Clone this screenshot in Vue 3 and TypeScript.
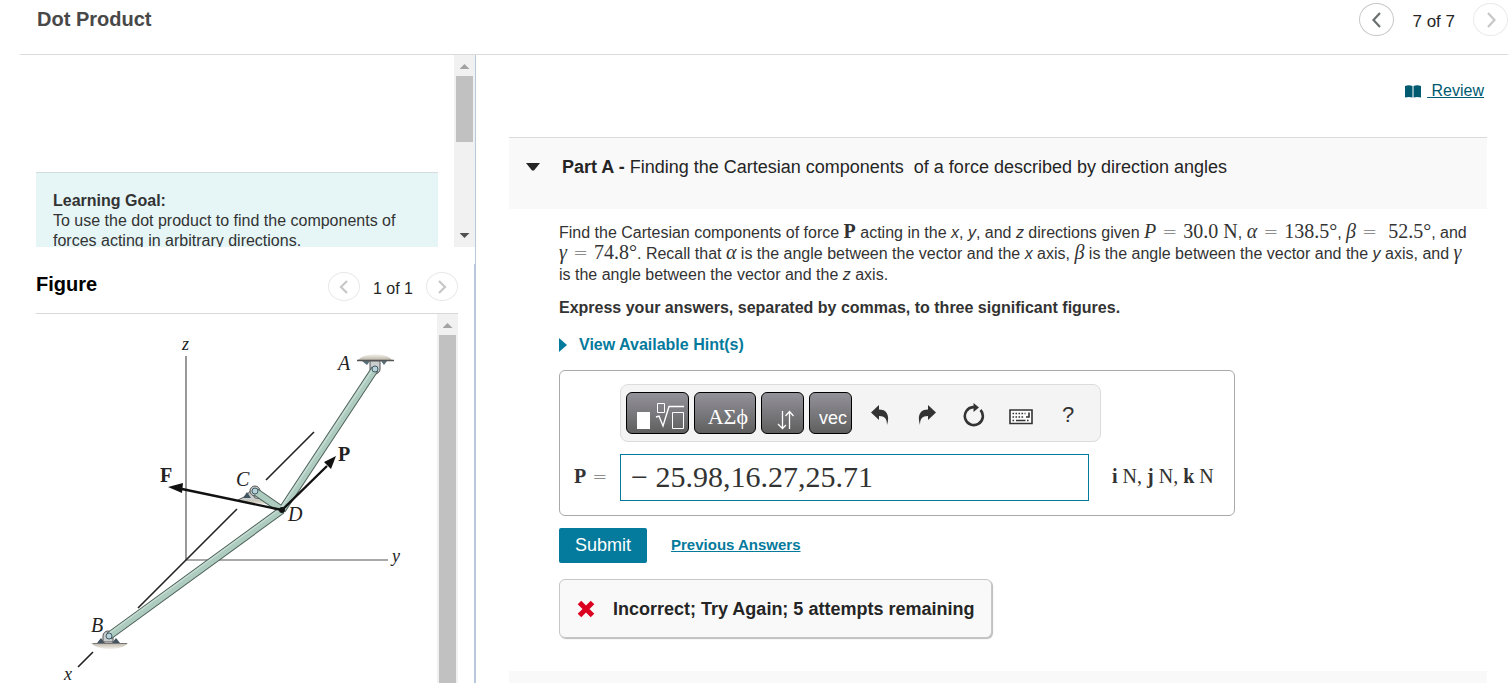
<script setup lang="ts">
import { ref } from 'vue'

const answer = ref('− 25.98,16.27,25.71')
const item = ref(7)
const itemCount = 7
const figure = ref(1)
const figureCount = 1
</script>

<template>
  <div class="page">
    <header class="top">
      <h1>Dot Product</h1>
      <nav class="pager" aria-label="Items">
        <button class="round" type="button" aria-label="Previous item">
          <svg width="12" height="16" viewBox="0 0 12 16"><path d="M9 1 2.500 8 9 15" /></svg>
        </button>
        <span>{{ item }} of {{ itemCount }}</span>
        <button class="round off" type="button" aria-label="Next item" disabled>
          <svg width="12" height="16" viewBox="0 0 12 16"><path d="M3 1 9.500 8 3 15" /></svg>
        </button>
      </nav>
    </header>

    <div class="columns">
      <aside class="side">
        <div class="intro">
          <div class="intro-view">
            <div class="goal">
              <strong>Learning Goal:</strong>
              <p>To use the dot product to find the components of forces acting in arbitrary directions.</p>
            </div>
          </div>
          <div class="bar" aria-hidden="true">
            <i class="arrow up"></i>
            <i class="thumb short"></i>
            <i class="arrow down"></i>
          </div>
        </div>

        <section class="figure">
          <div class="figure-head">
            <h2>Figure</h2>
            <nav class="pager small" aria-label="Figures">
              <button class="round off" type="button" aria-label="Previous figure" disabled>
                <svg width="12" height="16" viewBox="0 0 12 16"><path d="M9 2 3 8l6 6" /></svg>
              </button>
              <span>{{ figure }} of {{ figureCount }}</span>
              <button class="round off" type="button" aria-label="Next figure" disabled>
                <svg width="12" height="16" viewBox="0 0 12 16"><path d="m3 2 6 6-6 6" /></svg>
              </button>
            </nav>
          </div>
          <div class="figure-body">
            <div class="figure-view">
              <svg class="drawing" width="400" height="400" viewBox="36 314 400 400" role="img" aria-label="Pipe assembly A, B, C, D with forces F and P">
                <defs>
                  <linearGradient id="ground" x1="0" y1="0" x2="0" y2="1">
                    <stop offset="0" stop-color="#b9b4a6" />
                    <stop offset="1" stop-color="#f4f1ea" />
                  </linearGradient>
                  <linearGradient id="ceiling" x1="0" y1="1" x2="0" y2="0">
                    <stop offset="0" stop-color="#b9b4a6" />
                    <stop offset="1" stop-color="#f8f6f1" />
                  </linearGradient>
                </defs>
                <path class="axis" d="M186 356V560H388" />
                <path class="line" d="m314 432-48 48M237 509l-99 99M93 652l-15 15" />
                <!-- support A -->
                <path d="M358 360q4-5 17-6 14 1 17 6z" fill="url(#ceiling)" />
                <path d="M357 360.500H394" stroke="#555" stroke-width="1.400" />
                <path d="M362 361h8l-3 4zM381 361h6l-3 4z" fill="#576b76" />
                <path d="M370 361h10v8a5 5 0 0 1-10 0z" class="bracket" />
                <!-- support C -->
                <path d="M238 500l32-1q3 5-9 6l-21-3z" fill="url(#ground)" />
                <path d="M238 500l8-4 5-6 4 8 18 2" class="bracket" />
                <path d="M243 498l4-6 4 6z" fill="#41545f" />
                <circle cx="255" cy="491" r="5" class="bracket" />
                <!-- support B -->
                <path d="M91 643h37q-3 5-16 6-16 0-21-6z" fill="url(#ground)" />
                <path d="M93 643.500H127" stroke="#777" />
                <path d="M97 643l4-5 4 5zM112 643l4-5 4 5z" fill="#41545f" />
                <path d="M103 642v-6a5 5 0 0 1 10 0v6z" class="bracket" />
                <!-- pipes -->
                <path class="pipe-edge" d="M109 636 282 510M375 369 282 510M256 492l26 18" />
                <path class="pipe" d="M109 636 282 510M375 369 282 510M256 492l26 18" />
                <path class="shine" d="M108 634 280 509M373 369 281 508" />
                <circle cx="109" cy="636" r="3" class="pin" />
                <circle cx="375" cy="369" r="3" class="pin" />
                <circle cx="255" cy="491" r="3" class="pin" />
                <!-- forces -->
                <path class="force" d="M282 510 182 489M282 510l45-44" />
                <path d="m168 487 15-4-1 10zM336 456l-5 13-7-7z" fill="#111" />
                <circle cx="282" cy="510" r="3" fill="#111" />
                <g class="names">
                  <text x="182" y="350" class="minor">z</text>
                  <text x="338" y="370">A</text>
                  <text x="236" y="486">C</text>
                  <text x="288" y="521">D</text>
                  <text x="91" y="632">B</text>
                  <text x="392" y="562" class="minor">y</text>
                  <text x="64" y="680" class="minor">x</text>
                  <text x="160" y="482" class="vector">F</text>
                  <text x="338" y="461" class="vector">P</text>
                </g>
              </svg>
            </div>
            <div class="bar" aria-hidden="true">
              <i class="arrow up"></i>
              <i class="thumb"></i>
            </div>
          </div>
        </section>
      </aside>

      <main class="work">
        <div class="review">
          <svg width="16" height="13" viewBox="0 0 16 13" aria-hidden="true">
            <path d="M0 1q4-1.500 7.500 0v11.500Q4 11.500 0 12.500zM8.500 1q3.500-1.500 7.500 0v11.500q-4-1-7.500 0z" fill="#005a70" />
          </svg>
          <a href="#review">&nbsp;Review</a>
        </div>

        <section>
          <h3 class="part">
            <svg width="14" height="8" viewBox="0 0 14 8" aria-hidden="true"><path d="M0 0h14L8 7.500H6z" fill="#252525" /></svg>
            <span><b>Part A - </b>Finding the Cartesian components &nbsp;of a force described by direction angles</span>
          </h3>

          <div class="body">
            <p class="question">
              Find the Cartesian components of force <b class="m">P</b> acting in the <i>x</i>, <i>y</i>, and <i>z</i> directions given
              <span class="m"><i>P</i><span class="eq">=</span>30.0 N</span>, <span class="m"><i>α</i><span class="eq">=</span>138.5°</span>,
              <span class="m"><i>β</i><span class="eq">=</span>&nbsp;52.5°</span>, and
              <span class="m"><i>γ</i><span class="eq">=</span>74.8°</span>. Recall that <i class="m">α</i> is the angle between the vector and the <i>x</i> axis,
              <i class="m">β</i> is the angle between the vector and the <i>y</i> axis, and <i class="m">γ</i>
              is&nbsp;the angle between the vector and the <i>z</i> axis.
            </p>
            <p class="express">Express your answers, separated by commas, to three significant figures.</p>
            <button class="hints" type="button">
              <svg width="8" height="14" viewBox="0 0 8 14" aria-hidden="true"><path d="M0 0 8 7 0 14z" fill="#047a9c" /></svg>
              View Available Hint(s)
            </button>

            <form class="answer" @submit.prevent>
              <div class="tools" role="toolbar" aria-label="Equation editor">
                <button class="key wide" type="button" aria-label="Templates">
                  <svg width="50" height="28" viewBox="0 0 50 28" fill="none" stroke="#fff">
                    <path d="M2 10h13v17H2z" fill="#fff" stroke="none" />
                    <path d="M22.500 1.500h7v9h-7zM37.500 10.500h11v16h-11z" />
                    <path d="M21 15l3-1 4 10 6-19.500h15" stroke-width="1.400" />
                  </svg>
                </button>
                <button class="key greek" type="button">ΑΣϕ</button>
                <button class="key" type="button" aria-label="Scripts">
                  <svg width="18" height="20" viewBox="0 0 18 20" fill="none" stroke="#fff" stroke-width="1.300">
                    <path d="M5.500 1v17M1 14l4.500 4.500L9 15M12.500 19V2M8.500 6l4-4.500 4 4.500" />
                  </svg>
                </button>
                <button class="key vec" type="button">vec</button>
                <button class="tool" type="button" aria-label="Undo">
                  <svg width="18" height="20" viewBox="0 0 18 20"><path d="M8 0v4.500c8 0 11 6 8 15.500 0-6-2-9-8-9v4L0 7.500z" /></svg>
                </button>
                <button class="tool" type="button" aria-label="Redo">
                  <svg width="18" height="20" viewBox="0 0 18 20"><path d="M10 0v4.500c-8 0-11 6-8 15.500 0-6 2-9 8-9v4l8-7.500z" /></svg>
                </button>
                <button class="tool" type="button" aria-label="Reset">
                  <svg width="22" height="24" viewBox="0 0 22 24"><path d="M17.500 7a9 9 0 1 1-7.500-2.900h2" fill="none" stroke="#333" stroke-width="2.600" /><path d="M10.500 0l5.500 4.500-5.500 4.500z" /></svg>
                </button>
                <button class="tool low" type="button" aria-label="Keyboard">
                  <svg width="24" height="16" viewBox="0 0 24 16">
                    <path d="M1 1h22v13.500H1z" fill="#fff" stroke="#333" stroke-width="1.600" />
                    <path d="M3.500 4.500h13M3.500 8h12M3.500 11.500h2M18 11.500h2.500" stroke="#333" stroke-width="1.600" stroke-dasharray="1.600 1.400" />
                    <path d="M7 11.500h9.500M17 8h3V3.500" fill="none" stroke="#333" stroke-width="1.600" />
                  </svg>
                </button>
                <button class="tool help" type="button" aria-label="Help">?</button>
              </div>
              <label class="lead" for="answer"><b>P</b><span class="eq">=</span></label>
              <input id="answer" v-model="answer" type="text" spellcheck="false" autocomplete="off" />
              <span class="units"><b>i</b> N, <b>j</b> N, <b>k</b> N</span>
            </form>

            <div class="actions">
              <button class="submit" type="button">Submit</button>
              <a href="#previous">Previous Answers</a>
            </div>

            <div class="result" role="status">
              <svg width="18" height="18" viewBox="0 0 18 18" aria-hidden="true">
                <path d="m2.500 2.500 13 13M15.500 2.500l-13 13" stroke="#db0020" stroke-width="5" />
              </svg>
              <strong>Incorrect; Try Again; 5 attempts remaining</strong>
            </div>
          </div>
        </section>
        <div class="next-part"></div>
      </main>
    </div>
  </div>
</template>

<style>
body {
  margin: 0;
  background: #fff;
}
</style>

<style scoped>
* {
  box-sizing: border-box;
}
.page {
  display: flex;
  flex-direction: column;
  height: 100vh;
  overflow: hidden;
  font: 16px/20px "Liberation Sans", Arial, sans-serif;
  color: #333;
}
h1, h2, h3, p {
  margin: 0;
}
button {
  font: inherit;
  padding: 0;
  cursor: pointer;
}
svg {
  display: block;
  flex: none;
}
.top {
  display: flex;
  justify-content: space-between;
  align-items: flex-start;
  flex: none;
  height: 55px;
  margin-left: 20px;
  padding: 3px 0 0 17px;
  border-bottom: 1px solid #dbdbdb;
}
h1 {
  font-size: 20px;
  line-height: 32px;
  color: #484848;
}
.pager {
  display: flex;
  align-items: center;
  gap: 18px;
  font-size: 17px;
  color: #252525;
}
.pager span {
  padding-top: 5px;
  line-height: 28px;
}
.round {
  display: flex;
  align-items: center;
  justify-content: center;
  width: 35px;
  height: 33px;
  border: 1px solid #c7c7c7;
  border-radius: 50%;
  background: #fff;
}
.round path {
  fill: none;
  stroke: #6a7070;
  stroke-width: 2.2;
}
.round.off {
  border-color: #e9e9e9;
}
.round.off path {
  stroke: #c7c7c7;
}
.pager.small {
  gap: 13px;
  font-size: 16px;
}
.small .round {
  width: 32px;
  height: 29px;
}
.columns {
  display: grid;
  grid-template-columns: minmax(0, 476fr) minmax(0, 1032fr);
  grid-template-rows: minmax(0, 1fr);
  flex: 1;
  min-height: 0;
}
.side {
  display: flex;
  flex-direction: column;
  min-height: 0;
  border-right: 1px solid #b9c9db;
}
.intro {
  display: flex;
  flex: none;
  height: 192px;
  padding-left: 36px;
}
.intro-view {
  flex: 1;
  overflow: hidden;
  padding: 117px 16px 0 0;
}
.goal {
  padding: 18px 16px 16px 17px;
  border-top: 1px solid #d5dcdc;
  background: #e6f6f7;
}
.bar {
  display: flex;
  flex-direction: column;
  align-items: center;
  flex: none;
  width: 21px;
  background: #f1f1f1;
}
.arrow {
  flex: none;
  width: 10px;
  height: 5px;
  margin: 9px 0 7px;
  background: #a3a3a3;
  clip-path: polygon(50% 0, 100% 100%, 0 100%);
}
.arrow.down {
  margin: auto 0 9px;
  background: #505050;
  clip-path: polygon(0 0, 100% 0, 50% 100%);
}
.thumb {
  flex: 1;
  width: 17px;
  background: #c1c1c1;
}
.thumb.short {
  flex: none;
  height: 66px;
}
.figure {
  display: flex;
  flex-direction: column;
  flex: 1;
  min-height: 0;
  margin-top: 17px;
  padding: 0 16px 0 36px;
  border-right: 1px solid #b9c9db;
}
.figure-head {
  display: flex;
  justify-content: space-between;
  align-items: flex-start;
  flex: none;
  height: 50px;
  padding-top: 5px;
  border-bottom: 1px solid #d9d9d9;
}
h2 {
  font-size: 20px;
  line-height: 30px;
  color: #000;
}
.figure-head .pager {
  padding-top: 2px;
}
.figure-head .pager span {
  line-height: 26px;
}
.figure-body {
  display: flex;
  flex: 1;
  min-height: 0;
}
.figure-view {
  flex: 1;
  overflow: hidden;
}
.axis {
  fill: none;
  stroke: #555;
  stroke-width: 1.2;
}
.line {
  fill: none;
  stroke: #222;
  stroke-width: 1.6;
}
.bracket {
  fill: #c9cdcd;
  stroke: #555;
}
.pipe-edge,
.pipe,
.shine {
  fill: none;
  stroke: #4e625c;
  stroke-width: 8;
}
.pipe {
  stroke: #aecbc0;
  stroke-width: 6;
}
.shine {
  stroke: #c4dbd2;
  stroke-width: 1.5;
}
.pin {
  fill: #b8d2d8;
  stroke: #3f5a66;
}
.force {
  fill: none;
  stroke: #111;
  stroke-width: 2.4;
}
.names {
  font: italic 20px "Liberation Serif", "Times New Roman", serif;
  fill: #222;
}
.minor {
  font-size: 18px;
}
.vector {
  font-style: normal;
  font-weight: bold;
}
.work {
  min-width: 0;
  padding: 25px 21px 0 33px;
  overflow: hidden;
}
.review {
  display: flex;
  justify-content: flex-end;
  align-items: center;
  gap: 6px;
  padding-right: 3px;
  line-height: 22px;
}
.review a {
  color: #005a70;
}
.part {
  display: flex;
  align-items: center;
  gap: 22px;
  height: 72px;
  margin-top: 35px;
  padding: 0 18px 14px 17px;
  border-top: 1px solid #dadada;
  background: #f9f9f9;
  font-size: 18px;
  font-weight: normal;
  color: #252525;
}
.body {
  padding: 13px 4px 0 50px;
}
.question {
  line-height: 21px;
}
.m {
  font-family: "Liberation Serif", "Times New Roman", serif;
  font-size: 20px;
  line-height: 0;
  white-space: nowrap;
}
.eq {
  margin: 0 6px;
  font: 200 18px/0 "DejaVu Sans", sans-serif;
}
.express {
  margin-top: 13px;
  font-weight: bold;
}
.hints {
  display: flex;
  align-items: center;
  gap: 12px;
  margin-top: 17px;
  border: 0;
  background: none;
  color: #047a9c;
  font-weight: bold;
}
.answer {
  display: grid;
  grid-template-columns: 46px minmax(0, 469px) minmax(0, 1fr);
  row-gap: 12px;
  align-items: center;
  width: 676px;
  max-width: 100%;
  margin-top: 15px;
  padding: 13px 14px 14px;
  border: 1px solid #a9a9a9;
  border-radius: 6px;
  font-family: "Liberation Serif", "Times New Roman", serif;
  font-size: 20px;
}
.tools {
  display: flex;
  align-items: center;
  grid-column: 2 / 4;
  justify-self: start;
  gap: 5px;
  height: 58px;
  padding: 0 11px 0 5px;
  border: 1px solid #dcdcdc;
  border-radius: 8px;
  background: #f4f4f4;
}
.key {
  display: flex;
  align-items: flex-end;
  justify-content: flex-end;
  width: 43px;
  height: 42px;
  padding: 0 8px 3px 0;
  border: 1px solid #000;
  border-radius: 6px;
  background: linear-gradient(#94929a, #5f5f5f);
  color: #fff;
  line-height: 26px;
}
.key.wide {
  width: 63px;
  padding: 0 3px 3px 0;
}
.key.greek {
  width: 62px;
  padding: 0 7px 3px 0;
  font-size: 22px;
}
.key.vec {
  margin-right: 2px;
  padding: 0 4px 2px 0;
  font-family: "Liberation Sans", Arial, sans-serif;
  font-size: 18px;
}
.tool {
  display: flex;
  align-items: center;
  justify-content: center;
  width: 42px;
  height: 42px;
  padding-top: 4px;
  border: 0;
  background: none;
  fill: #333;
  color: #333;
}
.tool.low {
  padding-top: 8px;
}
.help {
  font-family: "Liberation Sans", Arial, sans-serif;
  font-size: 22px;
}
input {
  width: 100%;
  height: 47px;
  padding: 0 10px 2px;
  border: 1px solid #047a9c;
  outline: 0;
  background: #fff;
  color: #333;
  font: 30px "Liberation Serif", "Times New Roman", serif;
}
.lead,
.units {
  padding-bottom: 3px;
  white-space: nowrap;
}
.units {
  padding-left: 23px;
}
.actions {
  display: flex;
  align-items: center;
  gap: 24px;
  margin-top: 12px;
}
.submit {
  height: 35px;
  padding: 0 16px 2px;
  border: 0;
  border-radius: 2px;
  background: #047a9c;
  color: #fff;
  font-size: 18px;
}
.actions a {
  padding-bottom: 2px;
  color: #047a9c;
  font-size: 15px;
  font-weight: bold;
}
.result {
  display: inline-flex;
  align-items: center;
  gap: 18px;
  height: 59px;
  margin-top: 16px;
  padding: 0 17px;
  border: 1px solid #c7c7c7;
  border-radius: 6px;
  background: #f9f9f9;
  box-shadow: 1px 1px 1px #bbb;
  color: #252525;
  font-size: 18px;
}
.next-part {
  height: 72px;
  margin-top: 33px;
  background: #f9f9f9;
}
</style>
